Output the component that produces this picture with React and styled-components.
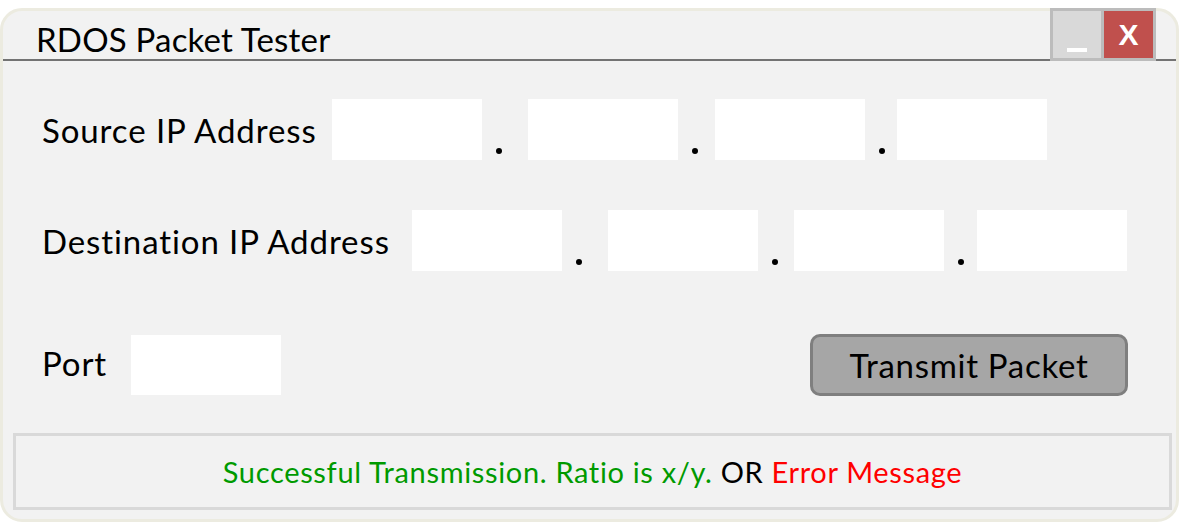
import styled, { createGlobalStyle } from 'styled-components'

const GlobalStyle = createGlobalStyle`
  html, body {
    margin: 0;
    padding: 0;
    background: #ffffff;
  }
  body {
    font-family: Lato, "Open Sans", sans-serif;
    color: #000;
  }
`

const Window = styled.div`
  box-sizing: border-box;
  width: 1179px;
  height: 514px;
  margin-top: 8px;
  border: 3px solid #ecebe0;
  border-radius: 22px;
  background: #f2f2f2;
  display: flex;
  flex-direction: column;
`

const TitleBar = styled.div`
  height: 48px;
  border-bottom: 2px solid #737373;
  display: flex;
  align-items: flex-start;
  padding-left: 33px;
`

const Title = styled.div`
  font-size: 33px;
  letter-spacing: 0.2px;
  line-height: 48px;
  margin-top: 4px;
`

const Controls = styled.div`
  margin-left: auto;
  margin-right: 20px;
  margin-top: -3px;
  height: 47px;
  border: 3px solid #bcbcbc;
  background: #bcbcbc;
  display: flex;
  gap: 3px;
  position: relative;
`

const CtrlButton = styled.div`
  width: ${(p) => p.$w}px;
  height: 47px;
  background: ${(p) => p.$bg};
  display: flex;
  align-items: center;
  justify-content: center;
  color: #fff;
  font-family: "Liberation Sans", Arial, sans-serif;
  font-weight: bold;
  font-size: 30px;
`

const MinBar = styled.div`
  width: 20px;
  height: 4px;
  background: #fff;
  margin-top: 30px;
`

const Body = styled.div`
  flex: 1;
  display: flex;
  flex-direction: column;
  padding: 38px 4px 9px 10px;
`

const Row = styled.div`
  display: flex;
  align-items: stretch;
  padding-left: 27px;
  margin-bottom: ${(p) => p.$mb}px;
`

const Label = styled.div`
  width: ${(p) => p.$w}px;
  display: flex;
  align-items: center;
  font-size: 33px;
  letter-spacing: 0.9px;
  padding-left: 2px;
  padding-bottom: ${(p) => p.$pb || 0}px;
  box-sizing: border-box;
`

const Field = styled.input`
  box-sizing: border-box;
  width: 150px;
  height: ${(p) => p.$h || 61}px;
  border: none;
  outline: none;
  background: #ffffff;
  margin: 0;
  padding: 0 8px;
  font-size: 24px;
`

const Sep = styled.div`
  width: ${(p) => p.$w}px;
  display: flex;
  align-items: flex-end;
  padding-left: 14px;
  padding-bottom: 6px;
  box-sizing: border-box;
`

const Dot = styled.span`
  width: 6px;
  height: 6px;
  border-radius: 50%;
  background: #000;
`

const TransmitButton = styled.button`
  box-sizing: border-box;
  margin-left: auto;
  margin-right: 44px;
  margin-top: -1px;
  width: 318px;
  height: 62px;
  background: #a6a6a6;
  border: 3px solid #7f7f7f;
  border-radius: 10px;
  font-family: Lato, "Open Sans", sans-serif;
  font-size: 33px;
  letter-spacing: 0.7px;
  color: #000;
  padding: 0;
  cursor: pointer;
`

const StatusBox = styled.div`
  box-sizing: border-box;
  margin-top: auto;
  height: 77px;
  border: 3px solid #d9d9d9;
  display: flex;
  align-items: center;
  justify-content: center;
  font-size: 29px;
  letter-spacing: 0.66px;
`

const Msg = styled.span`
  color: ${(p) => p.$c};
  white-space: pre;
`

const Octet = ({ w }) => (
  <>
    <Sep $w={w}>
      <Dot />
    </Sep>
    <Field />
  </>
)

const IpGroup = ({ seps }) => (
  <>
    <Field />
    {seps.map((w, i) => (
      <Octet key={i} w={w} />
    ))}
  </>
)

export default function App() {
  return (
    <>
      <GlobalStyle />
      <Window>
        <TitleBar>
          <Title>RDOS Packet Tester</Title>
          <Controls>
            <CtrlButton $w={48} $bg="#d9d9d9">
              <MinBar />
            </CtrlButton>
            <CtrlButton $w={49} $bg="#c0504d">X</CtrlButton>
          </Controls>
        </TitleBar>
        <Body>
          <Row $mb={50}>
            <Label $w={292}>Source IP Address</Label>
            <IpGroup seps={[46, 37, 32]} />
          </Row>
          <Row $mb={64}>
            <Label $w={372}>Destination IP Address</Label>
            <IpGroup seps={[46, 36, 33]} />
          </Row>
          <Row $mb={0}>
            <Label $w={91} $pb={5}>Port</Label>
            <Field $h={60} />
            <TransmitButton>Transmit Packet</TransmitButton>
          </Row>
          <StatusBox>
            <Msg $c="#009a00">Successful Transmission. Ratio is x/y. </Msg>
            <Msg $c="#000">OR </Msg>
            <Msg $c="#ff0000">Error Message</Msg>
          </StatusBox>
        </Body>
      </Window>
    </>
  )
}
